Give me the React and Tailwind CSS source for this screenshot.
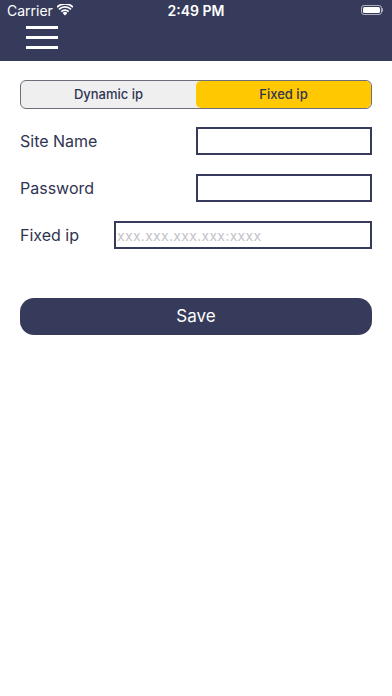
import React, { useState } from "react";

const font = { fontFamily: "Inter, 'Noto Sans', sans-serif" };

const StatusBar = () => (
  <div className="h-[20px] flex items-center justify-between px-[7px] text-white text-[14px]">
    <div className="flex items-center gap-[4px] w-[120px]">
      <span>Carrier</span>
      <svg width="16" height="12" viewBox="0 0 16 12" fill="white">
        <path d="M8 11.5 5.6 9a3.4 3.4 0 0 1 4.8 0z" />
        <path d="M3.7 7.1a6.1 6.1 0 0 1 8.6 0l-1.2 1.2a4.4 4.4 0 0 0-6.2 0z" />
        <path d="M1.4 4.8a9.4 9.4 0 0 1 13.2 0l-1.2 1.2a7.7 7.7 0 0 0-10.8 0z" />
        <path d="M-0.6 2.6a12.3 12.3 0 0 1 17.2 0l-1.2 1.2a10.6 10.6 0 0 0-14.8 0z" />
      </svg>
    </div>
    <span className="font-semibold">2:49 PM</span>
    <div className="w-[120px] flex justify-end pr-[2px]">
      <div className="flex items-center">
        <div className="w-[21px] h-[10px] rounded-[3px] border border-white/60 p-[1px]">
          <div className="w-full h-full bg-white rounded-[1.5px]" />
        </div>
        <div className="w-[1.5px] h-[4px] bg-white/60 rounded-r-sm" />
      </div>
    </div>
  </div>
);

const Field = ({ label, box, placeholder }) => (
  <div className="flex items-center h-[28px]">
    <span className="flex-1 text-[16px] text-[#2f3452]">{label}</span>
    <input
      className={`${box} h-[28px] border-2 border-[#363b5c] outline-none px-[1px] text-[14px] tracking-[0.3px] placeholder:text-[#c4c4c8]`}
      placeholder={placeholder}
    />
  </div>
);

export default function App() {
  const [mode, setMode] = useState("fixed");
  return (
    <div className="w-[392px] h-[696px] bg-white" style={font}>
      <div className="bg-[#363b5c] h-[61px]">
        <StatusBar />
        <div className="pl-[26px] pt-[6px] flex flex-col gap-[7px]">
          <div className="w-[32px] h-[3px] bg-white" />
          <div className="w-[32px] h-[3px] bg-white" />
          <div className="w-[32px] h-[3px] bg-white" />
        </div>
      </div>

      <div className="px-[20px] pt-[19px]">
        <div className="flex h-[29px] rounded-[6px] border border-[#6e6e78] bg-[#efeff0] overflow-hidden text-[13px] font-medium text-[#2f3452]">
          <button
            onClick={() => setMode("dynamic")}
            className={`flex-1 ${mode === "dynamic" ? "bg-[#ffc800] rounded-[5px]" : ""}`}
          >
            Dynamic ip
          </button>
          <button
            onClick={() => setMode("fixed")}
            className={`flex-1 ${mode === "fixed" ? "bg-[#ffc800] rounded-[5px]" : ""}`}
          >
            Fixed ip
          </button>
        </div>

        <div className="flex flex-col gap-[19px] mt-[18px]">
          <Field label="Site Name" box="w-[176px]" />
          <Field label="Password" box="w-[176px]" />
          <Field label="Fixed ip" box="w-[258px]" placeholder="xxx.xxx.xxx.xxx:xxxx" />
        </div>

        <button className="mt-[49px] w-full h-[37px] rounded-[14px] bg-[#363b5c] text-white text-[17px]">
          Save
        </button>
      </div>
    </div>
  );
}
